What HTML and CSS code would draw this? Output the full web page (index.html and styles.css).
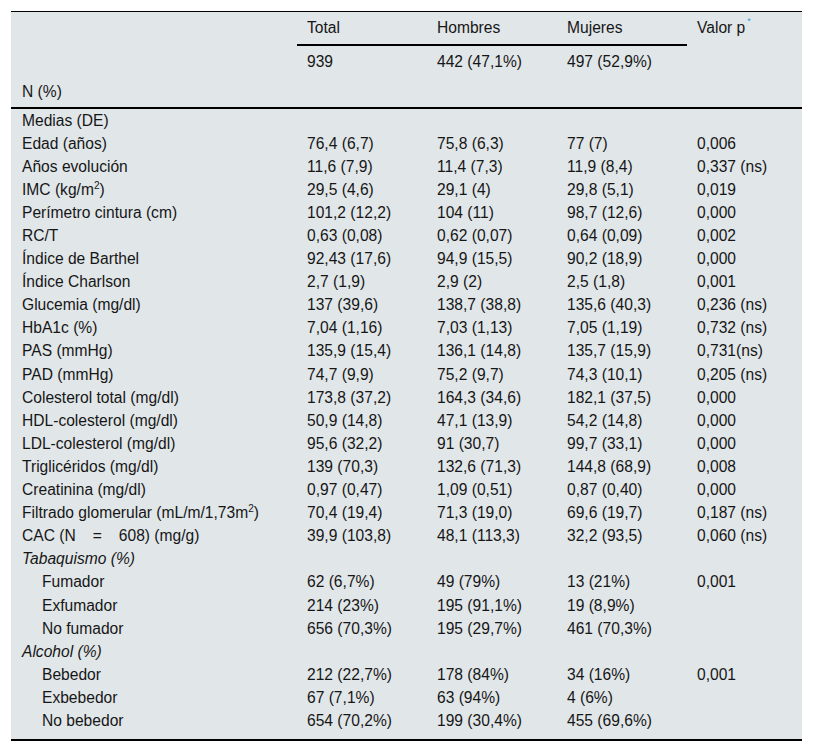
FILE: index.html
```html
<!DOCTYPE html>
<html lang="es">
<head>
<meta charset="utf-8">
<title>Tabla</title>
<link rel="stylesheet" href="styles.css">
</head>
<body>
<table class="data">
  <colgroup>
    <col class="c-label"><col class="c-num"><col class="c-num"><col class="c-num"><col class="c-p">
  </colgroup>
  <thead>
    <tr class="h1">
      <th rowspan="3" class="corner">N (%)</th>
      <th class="grp">Total</th>
      <th class="grp">Hombres</th>
      <th class="grp">Mujeres</th>
      <th rowspan="3" class="pcol">Valor p<span class="ast">*</span></th>
    </tr>
    <tr class="h2">
      <td>939</td><td>442 (47,1%)</td><td>497 (52,9%)</td>
    </tr>
    <tr class="h3"><td></td><td></td><td></td></tr>
  </thead>
  <tbody>
    <tr><td>Medias (DE)</td><td></td><td></td><td></td><td></td></tr>
    <tr><td>Edad (años)</td><td>76,4 (6,7)</td><td>75,8 (6,3)</td><td>77 (7)</td><td>0,006</td></tr>
    <tr><td>Años evolución</td><td>11,6 (7,9)</td><td>11,4 (7,3)</td><td>11,9 (8,4)</td><td>0,337 (ns)</td></tr>
    <tr><td>IMC (kg/m<sup>2</sup>)</td><td>29,5 (4,6)</td><td>29,1 (4)</td><td>29,8 (5,1)</td><td>0,019</td></tr>
    <tr><td>Perímetro cintura (cm)</td><td>101,2 (12,2)</td><td>104 (11)</td><td>98,7 (12,6)</td><td>0,000</td></tr>
    <tr><td>RC/T</td><td>0,63 (0,08)</td><td>0,62 (0,07)</td><td>0,64 (0,09)</td><td>0,002</td></tr>
    <tr><td>Índice de Barthel</td><td>92,43 (17,6)</td><td>94,9 (15,5)</td><td>90,2 (18,9)</td><td>0,000</td></tr>
    <tr><td>Índice Charlson</td><td>2,7 (1,9)</td><td>2,9 (2)</td><td>2,5 (1,8)</td><td>0,001</td></tr>
    <tr><td>Glucemia (mg/dl)</td><td>137 (39,6)</td><td>138,7 (38,8)</td><td>135,6 (40,3)</td><td>0,236 (ns)</td></tr>
    <tr><td>HbA1c (%)</td><td>7,04 (1,16)</td><td>7,03 (1,13)</td><td>7,05 (1,19)</td><td>0,732 (ns)</td></tr>
    <tr><td>PAS (mmHg)</td><td>135,9 (15,4)</td><td>136,1 (14,8)</td><td>135,7 (15,9)</td><td>0,731(ns)</td></tr>
    <tr><td>PAD (mmHg)</td><td>74,7 (9,9)</td><td>75,2 (9,7)</td><td>74,3 (10,1)</td><td>0,205 (ns)</td></tr>
    <tr><td>Colesterol total (mg/dl)</td><td>173,8 (37,2)</td><td>164,3 (34,6)</td><td>182,1 (37,5)</td><td>0,000</td></tr>
    <tr><td>HDL-colesterol (mg/dl)</td><td>50,9 (14,8)</td><td>47,1 (13,9)</td><td>54,2 (14,8)</td><td>0,000</td></tr>
    <tr><td>LDL-colesterol (mg/dl)</td><td>95,6 (32,2)</td><td>91 (30,7)</td><td>99,7 (33,1)</td><td>0,000</td></tr>
    <tr><td>Triglicéridos (mg/dl)</td><td>139 (70,3)</td><td>132,6 (71,3)</td><td>144,8 (68,9)</td><td>0,008</td></tr>
    <tr><td>Creatinina (mg/dl)</td><td>0,97 (0,47)</td><td>1,09 (0,51)</td><td>0,87 (0,40)</td><td>0,000</td></tr>
    <tr><td>Filtrado glomerular (mL/m/1,73m<sup>2</sup>)</td><td>70,4 (19,4)</td><td>71,3 (19,0)</td><td>69,6 (19,7)</td><td>0,187 (ns)</td></tr>
    <tr><td>CAC (N<span class="gap"></span>=<span class="gap"></span>608) (mg/g)</td><td>39,9 (103,8)</td><td>48,1 (113,3)</td><td>32,2 (93,5)</td><td>0,060 (ns)</td></tr>
    <tr><td class="sec">Tabaquismo (%)</td><td></td><td></td><td></td><td></td></tr>
    <tr><td class="sub">Fumador</td><td>62 (6,7%)</td><td>49 (79%)</td><td>13 (21%)</td><td>0,001</td></tr>
    <tr><td class="sub">Exfumador</td><td>214 (23%)</td><td>195 (91,1%)</td><td>19 (8,9%)</td><td></td></tr>
    <tr><td class="sub">No fumador</td><td>656 (70,3%)</td><td>195 (29,7%)</td><td>461 (70,3%)</td><td></td></tr>
    <tr><td class="sec">Alcohol (%)</td><td></td><td></td><td></td><td></td></tr>
    <tr><td class="sub">Bebedor</td><td>212 (22,7%)</td><td>178 (84%)</td><td>34 (16%)</td><td>0,001</td></tr>
    <tr><td class="sub">Exbebedor</td><td>67 (7,1%)</td><td>63 (94%)</td><td>4 (6%)</td><td></td></tr>
    <tr class="last"><td class="sub">No bebedor</td><td>654 (70,2%)</td><td>199 (30,4%)</td><td>455 (69,6%)</td><td></td></tr>
  </tbody>
</table>
</body>
</html>
```

FILE: styles.css
```css
html, body {
  margin: 0;
  padding: 0;
  background: #ffffff;
}
body {
  padding: 11px 0 0 11px;
  font-family: "Liberation Sans", Arial, sans-serif;
  font-size: 15.6px;
  color: #161616;
}
.data {
  width: 791px;
  border-collapse: collapse;
  background: #e1e6e9;
  border-top: 1px solid #000;
  border-bottom: 2px solid #000;
  table-layout: fixed;
}
.c-label { width: 286px; }
.c-num { width: 130px; }
.c-p { width: 115px; }
.data th, .data td {
  padding: 0 0 0 10px;
  text-align: left;
  font-weight: normal;
  white-space: nowrap;
}
.data thead tr.h1 th.grp { height: 32px; vertical-align: middle; border-bottom: 2px solid #000; }
.data thead tr.h1 th.corner { vertical-align: bottom; padding-bottom: 6px; padding-left: 11px; }
.data thead tr.h1 th.pcol { vertical-align: top; padding-top: 7px; }
.data thead tr.h2 td { height: 31px; }
.data thead tr.h3 td { height: 30px; }
.data thead { border-bottom: 2px solid #000; }
.ast {
  display: inline-block;
  color: #2a9fe0;
  font-size: 9px;
  line-height: 1;
  margin-left: 2px;
  position: relative;
  top: -9px;
}
.data tbody td {
  height: 23.1px;
  line-height: 18px;
}
.data tbody td:first-child { padding-left: 11px; }
.data tbody tr.last td { padding-bottom: 6px; }
.data sup { font-size: 10px; line-height: 0; }
.data td.sec { font-style: italic; }
.data tbody td.sub { padding-left: 31px; }
.gap { display: inline-block; width: 17px; }
```
